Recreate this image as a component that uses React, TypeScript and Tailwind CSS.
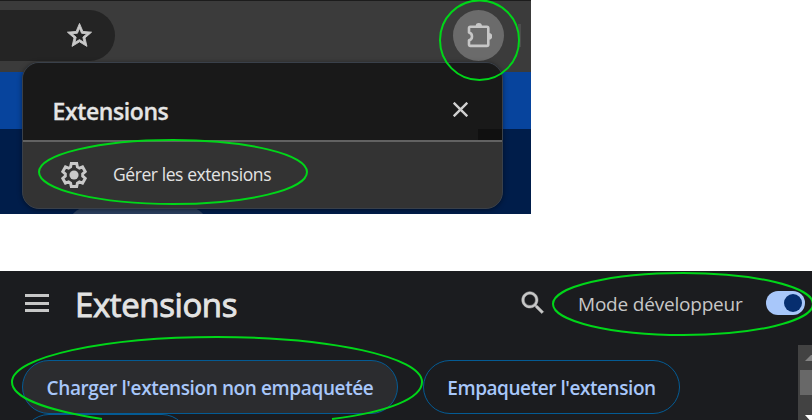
import React from "react";

const GEAR =
  "M9.7 2.2H14.3L14.9 5.1L16.6 6.1L19.3 5.1L21.6 9.1L19.4 11V13L21.6 14.9L19.3 18.9L16.6 17.9L14.9 18.9L14.3 21.8H9.7L9.1 18.9L7.4 17.9L4.7 18.9L2.4 14.9L4.6 13V11L2.4 9.1L4.7 5.1L7.4 6.1L9.1 5.1Z";

function StarIcon() {
  return (
    <svg className="h-[29px] w-[29px]" viewBox="0 0 24 24" fill="#c9c9c9" stroke="#c9c9c9" strokeWidth="0.75">
      <path d="M22 9.24l-7.19-.62L12 2 9.19 8.63 2 9.24l5.46 4.73L5.82 21 12 17.27 18.18 21l-1.63-7.03L22 9.24zM12 15.4l-3.76 2.27 1-4.28-3.32-2.88 4.38-.38L12 6.1l1.71 4.04 4.38.38-3.32 2.88 1 4.28L12 15.4z" />
    </svg>
  );
}

function PuzzleIcon() {
  return (
    <svg className="h-[27px] w-[27px]" viewBox="0 0 27 27">
      <path
        d="M5.4 4.8H21.9Q23.3 4.8 23.3 6.2V22.5Q23.3 23.9 21.9 23.9H5.4Q4 23.9 4 22.5V18.3C8 17.3 8 11.5 4 10.5V6.2Q4 4.8 5.4 4.8Z"
        fill="none"
        stroke="#c7c7c7"
        strokeWidth="2.6"
        strokeLinejoin="round"
      />
      <path d="M10.6 4.4a3.2 3.4 0 0 1 6.4 0zM24 10.9a3.2 3.4 0 0 1 0 6.8z" fill="#c7c7c7" />
    </svg>
  );
}

function Browser() {
  return (
    <section className="relative h-[214px] w-[531px] overflow-hidden bg-[#001d4a]">
      <div className="flex h-[72px] items-start justify-between border-t border-[#1c1c1c] bg-[#3b3b3b] pt-[9px] pr-[10px]">
        <div className="flex h-[51px] w-[115px] items-center justify-end rounded-r-full bg-[#242424] pr-[21px]">
          <StarIcon />
        </div>
        <div className="flex items-center">
          <div className="flex h-[51px] w-[51px] items-center justify-center rounded-full bg-[#6b6b6b]">
            <PuzzleIcon />
          </div>
          <div className="ml-[14px] h-[23px] w-[3px] bg-[#4d4d4d]" />
        </div>
      </div>
      <div className="h-[57px] bg-[#07449d]" />
      <div className="absolute top-[208px] left-[70px] h-[30px] w-[136px] rounded-[20px] bg-[#2b3f5f]" />
      <div className="absolute top-[62px] left-[22px] flex h-[147px] w-[481px] flex-col overflow-hidden rounded-[17px] border border-[#39404a] bg-[#333333] shadow-[0_1px_5px_rgba(0,0,0,0.45)]">
        <div className="relative flex h-[77px] items-center justify-between bg-[#191919] pt-[18px] pr-[34px] pl-[29.5px]">
          <h2 className="text-[23px] leading-[30px] font-semibold tracking-[-0.4px] text-[#e5e5e5] [-webkit-text-stroke:0.3px_#e5e5e5]">Extensions</h2>
          <svg className="-mt-[2px] h-[15px] w-[15px]" viewBox="0 0 15 15" stroke="#cfcfcf" strokeWidth="2.4">
            <path d="M.7.7 14.3 14.3M14.3.7.7 14.3" />
          </svg>
          <div className="absolute right-0 bottom-0 h-[11px] w-[24px] bg-[#101010]" />
        </div>
        <div className="h-[2px] shrink-0 bg-[#626262]" />
        <div className="flex flex-1 items-center pl-[38px]">
          <svg className="h-[26px] w-[26px]" viewBox="0.9 0.9 22.2 22.2">
            <path d={GEAR} fill="none" stroke="#c9c9c9" strokeWidth="2.5" />
            <circle cx="12" cy="12" r="3.9" fill="#c9c9c9" />
          </svg>
          <span className="-mt-[2px] ml-[26px] text-[17.5px] leading-6 tracking-[-0.42px] text-[#e3e3e3]">Gérer les extensions</span>
        </div>
      </div>
    </section>
  );
}

function ExtensionsPage() {
  return (
    <section className="flex h-[149px] flex-col overflow-hidden bg-[#1b1c1f]">
      <header className="flex h-[74px] shrink-0 items-start">
        <div className="mt-[23px] ml-[25px] flex w-[24px] shrink-0 flex-col gap-[4.5px]">
          <div className="h-[3px] bg-[#c7c7c7]" />
          <div className="h-[3px] bg-[#c7c7c7]" />
          <div className="h-[3px] bg-[#c7c7c7]" />
        </div>
        <h1 className="mt-[12px] ml-[26px] w-[443px] shrink-0 text-[33px] leading-[44px] tracking-[-0.4px] text-[#e3e3e3] [-webkit-text-stroke:0.9px_#e3e3e3]">Extensions</h1>
        <svg className="mt-[17px] h-[30px] w-[30px] shrink-0" viewBox="0 0 24 24" fill="#c7c7c7" stroke="#c7c7c7" strokeWidth="0.35">
          <path d="M15.5 14h-.79l-.28-.27C15.41 12.59 16 11.11 16 9.5 16 5.91 13.09 3 9.5 3S3 5.91 3 9.5 5.91 16 9.5 16c1.61 0 3.09-.59 4.23-1.57l.27.28v.79l5 4.99L20.49 19l-4.99-5zm-6 0C7.01 14 5 11.99 5 9.5S7.01 5 9.5 5 14 7.01 14 9.5 11.99 14 9.5 14z" />
        </svg>
        <span className="mt-[19px] ml-[30px] w-[188px] shrink-0 text-[19px] leading-[28px] tracking-[-0.2px] whitespace-nowrap text-[#c7c7c7]">Mode développeur</span>
        <div className="mt-[20px] flex h-[24px] w-[39px] shrink-0 items-center justify-end rounded-full bg-[#a8c7fa] pr-[3px]">
          <div className="h-[18px] w-[18px] rounded-full bg-[#062e6f]" />
        </div>
      </header>
      <div className="flex flex-1 justify-between">
        <div className="flex flex-col pt-[15px] pl-[22px]">
          <div className="flex gap-[25px]">
            <button className="h-[54px] w-[376px] rounded-full border border-[#045b94] bg-[#2b2c2f] pt-[2px] text-[19px] font-semibold tracking-[-0.38px] whitespace-nowrap text-[#a8c7fa]">
              Charger l'extension non empaquetée
            </button>
            <button className="h-[54px] w-[257px] rounded-full border border-[#045b94] pt-[2px] text-[19px] font-semibold tracking-[-0.44px] whitespace-nowrap text-[#a8c7fa]">
              Empaqueter l'extension
            </button>
          </div>
          <div className="h-[54px] w-[167px] shrink-0 rounded-full border border-[#045b94]" />
        </div>
        <div className="flex w-[14px] flex-col items-end bg-[#424242]">
          <svg className="mt-[10px] h-[6px] w-[7px] shrink-0" viewBox="0 0 7 6" fill="#838383">
            <path d="M0 6 6 0H7V6z" />
          </svg>
          <div className="mt-[9px] h-[25px] w-[12px] shrink-0 bg-[#686868]" />
          <svg className="mt-[20px] h-[5px] w-[7px] shrink-0" viewBox="0 0 7 5" fill="#ffffff">
            <path d="M0 0H7V5H4.5z" />
          </svg>
        </div>
      </div>
    </section>
  );
}

function Annotations() {
  return (
    <svg
      className="pointer-events-none absolute top-0 left-0 h-[420px] w-[812px]"
      viewBox="0 0 812 420"
      fill="none"
      stroke="#00d619"
      strokeWidth="2"
    >
      <ellipse cx="479.5" cy="40.2" rx="39.5" ry="39.8" />
      <ellipse cx="173" cy="172" rx="134" ry="32" />
      <ellipse cx="683" cy="304" rx="130" ry="31" />
      <path d="M102 419C44 410 12 397 12 382C12 357 104 337 217 337C330 337 422 357 422 382C422 398 389 412 332 419" />
    </svg>
  );
}

export default function App() {
  return (
    <main className="relative flex h-[420px] w-[812px] flex-col justify-between overflow-hidden bg-white font-['Open_Sans','Noto_Sans',sans-serif]">
      <Browser />
      <ExtensionsPage />
      <Annotations />
    </main>
  );
}
